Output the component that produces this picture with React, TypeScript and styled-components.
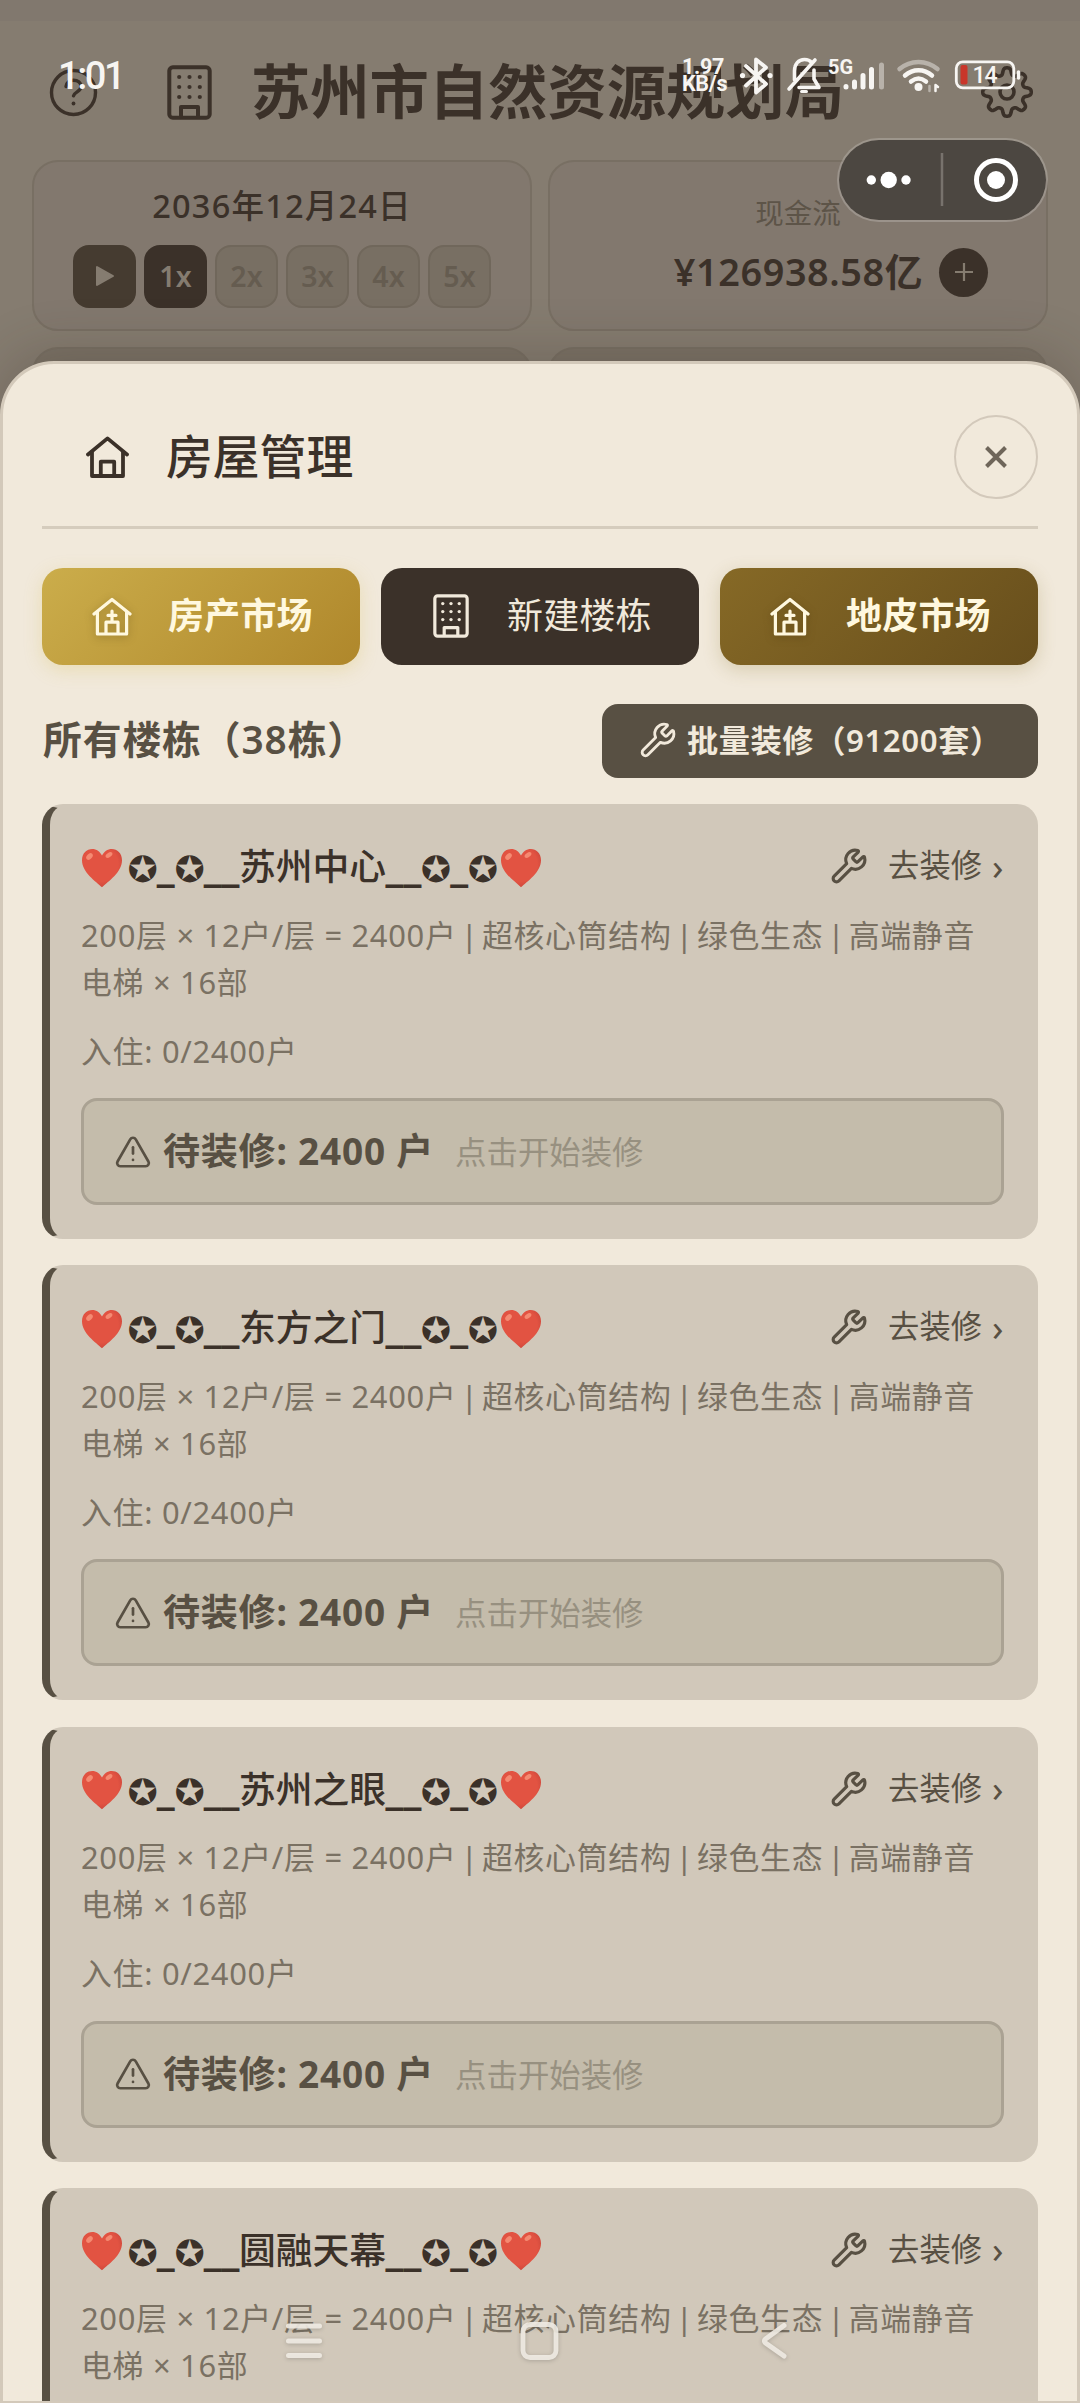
import React from 'react';
import styled, { createGlobalStyle, css } from 'styled-components';
import { Wrench, TriangleAlert } from 'lucide-react';

const INK = '#3b3129';
const BROWN = '#585043';

const GlobalStyle = createGlobalStyle`
  * { box-sizing: border-box; }
  body {
    margin: 0;
    background: #81786e;
    font-family: 'Noto Sans', 'Noto Sans CJK SC', sans-serif;
    color: ${INK};
  }
  button { font: inherit; color: inherit; border: 0; background: none; padding: 0; margin: 0; }
  svg { display: block; flex: none; }
`;

const Screen = styled.div`
  position: relative;
  width: 1080px;
  height: 2403px;
  overflow: hidden;
  padding-top: 21px;
`;

const AppPanel = styled.main`
  height: 1000px;
  background: #857c70;
`;

const AppHeader = styled.header`
  display: flex;
  align-items: center;
  height: 139px;
  padding: 3px 46px 0 49px;
`;

const AppTitle = styled.h1`
  flex: 1;
  margin: -3px 0 0 39px;
  font-size: 59.3px;
  font-weight: 700;
  line-height: 70px;
  white-space: nowrap;
`;

const BuildingSlot = styled.div`
  margin-left: 69px;
`;

const StatGrid = styled.section`
  display: grid;
  grid-template-columns: 500px 500px;
  column-gap: 16px;
  row-gap: 16px;
  padding-left: 32px;
`;

const StatCard = styled.div<{ $dim?: boolean }>`
  display: flex;
  flex-direction: column;
  align-items: center;
  height: 171px;
  border: 2px solid #786f63;
  border-radius: 26px;
  background: ${(p) => (p.$dim ? '#7b7266' : '#82786e')};
`;

const DateText = styled.div`
  margin-top: 22px;
  font-size: 32.5px;
  font-weight: 500;
  line-height: 44px;
  letter-spacing: 1.2px;
`;

const SpeedRow = styled.div`
  display: flex;
  gap: 8px;
  margin-top: 17px;
`;

const SpeedButton = styled.button<{ $kind: 'play' | 'active' | 'idle' }>`
  display: flex;
  align-items: center;
  justify-content: center;
  width: 63px;
  height: 63px;
  padding-bottom: 2px;
  border-radius: 16px;
  font-size: 28.5px;
  font-weight: 600;
  ${(p) =>
    p.$kind === 'play'
      ? css`background: #453b30; color: #857c70;`
      : p.$kind === 'active'
      ? css`background: ${INK}; color: #857c70;`
      : css`background: #786f63; border: 2px solid #70675b; color: #655c50;`}
`;

const CashLabel = styled.div`
  margin-top: 31px;
  font-size: 28.5px;
  line-height: 40px;
  color: #5d5448;
`;

const CashRow = styled.div`
  display: flex;
  align-items: center;
  gap: 16px;
  margin-top: 14px;
  padding-left: 66px;
`;

const CashValue = styled.div`
  font-size: 37.8px;
  font-weight: 600;
  line-height: 50px;
  letter-spacing: 0.6px;
  white-space: nowrap;
`;

const PlusButton = styled.button`
  display: flex;
  align-items: center;
  justify-content: center;
  width: 49px;
  height: 49px;
  border-radius: 50%;
  background: ${INK};
`;

const Sheet = styled.section`
  position: absolute;
  left: 0;
  right: 0;
  top: 361px;
  bottom: 0;
  overflow: hidden;
  padding: 0 39px;
  border: 3px solid #d3c9ba;
  border-bottom-width: 2px;
  border-radius: 54px 54px 0 0;
  background: #f1e9db;
`;

const SheetShade = styled.div`
  position: absolute;
  left: 0;
  right: 0;
  top: 361px;
  height: 400px;
  border-radius: 54px 54px 0 0;
  box-shadow: 0 -10px 52px rgba(50, 40, 30, 0.22);
`;

const SheetHeader = styled.header`
  display: flex;
  align-items: center;
  height: 165px;
  padding: 24px 0 0 44px;
  border-bottom: 3px solid #d5ccbd;
`;

const SheetTitle = styled.h2`
  flex: 1;
  margin: -3px 0 0 37px;
  font-size: 46.8px;
  font-weight: 500;
  line-height: 60px;
`;

const CloseButton = styled.button`
  display: flex;
  align-items: center;
  justify-content: center;
  width: 84px;
  height: 84px;
  border: 2.6px solid #d3c9bb;
  border-radius: 50%;
`;

const ActionRow = styled.div`
  display: grid;
  grid-template-columns: repeat(3, 318px);
  gap: 21px;
  margin-top: 39px;
`;

const ActionButton = styled.button<{ $tone: 'gold' | 'dark' | 'bronze' }>`
  display: flex;
  align-items: center;
  height: 97px;
  padding: 0 0 1px 50px;
  border-radius: 21px;
  font-size: 36px;
  line-height: 50px;
  letter-spacing: 0.2px;
  white-space: nowrap;
  ${(p) =>
    p.$tone === 'gold'
      ? css`
          background: linear-gradient(135deg, #cbad4b 0%, #af872b 100%);
          box-shadow: 0 5px 18px rgba(212, 185, 70, 0.26);
          color: #fff8df;
          font-weight: 700;
        `
      : p.$tone === 'bronze'
      ? css`
          background: linear-gradient(135deg, #866926 0%, #674e1c 100%);
          box-shadow: 0 5px 18px rgba(139, 115, 40, 0.24);
          color: #fff8df;
          font-weight: 700;
        `
      : css`
          background: ${INK};
          color: #f1e9db;
        `}
  svg {
    filter: ${(p) => (p.$tone === 'dark' ? 'none' : 'drop-shadow(0 2px 4px rgba(60, 40, 0, 0.3))')};
  }
`;

const ActionIcon = styled.span`
  display: flex;
  justify-content: center;
  width: 40px;
  margin-right: 36px;
`;

const SectionRow = styled.div`
  display: flex;
  align-items: center;
  justify-content: space-between;
  height: 74px;
  margin-top: 39px;
`;

const SectionTitle = styled.h3`
  margin: -4px 0 0 1px;
  font-size: 38.8px;
  font-weight: 600;
  line-height: 54px;
  letter-spacing: 0.9px;
  color: ${BROWN};
  white-space: nowrap;
`;

const BatchButton = styled.button`
  display: flex;
  align-items: center;
  width: 436px;
  height: 74px;
  padding: 0 0 2px 37px;
  gap: 10px;
  border-radius: 16px;
  background: ${BROWN};
  color: #f1e9db;
  font-size: 31.2px;
  font-weight: 600;
  line-height: 44px;
  letter-spacing: 0.6px;
  white-space: nowrap;
`;

const List = styled.div`
  display: flex;
  flex-direction: column;
  gap: 26.3px;
  margin-top: 26px;
`;

const Card = styled.article`
  flex: none;
  height: 435px;
  padding: 34px 32.5px 0 31px;
  border: 2px solid #d1c8ba;
  border-left: 8px solid ${BROWN};
  border-radius: 21px;
  background: #d1c8ba;
`;

const CardHead = styled.div`
  display: flex;
  align-items: center;
  justify-content: space-between;
  height: 52px;
`;

const CardName = styled.div`
  display: flex;
  align-items: center;
  font-size: 36.8px;
  font-weight: 500;
  line-height: 52px;
  white-space: nowrap;
  svg { margin-top: 3px; }
`;

const StarRun = styled.span<{ $side: 'left' | 'right' }>`
  display: flex;
  align-items: center;
  margin-left: ${(p) => (p.$side === 'left' ? '4.5px' : '0')};
  margin-right: ${(p) => (p.$side === 'right' ? '2.5px' : '0')};
`;

const Star = styled.span`
  width: 29.6px;
  margin-top: 8px;
  text-align: center;
  font-family: 'DejaVu Sans', sans-serif;
  font-size: 36px;
  font-weight: 400;
`;

const Bar = styled.span<{ $n: number }>`
  display: flex;
  justify-content: center;
  width: ${(p) => p.$n * 17.4}px;
  font-size: 39.5px;
  font-weight: 800;
`;

const GoLink = styled.button`
  display: flex;
  align-items: center;
  color: ${BROWN};
  font-size: 31.3px;
  line-height: 44px;
`;

const GoLabel = styled.span`
  margin: -2px 10px 0 20px;
`;

const GoArrow = styled.span`
  margin-top: -1px;
  font-size: 37px;
`;

const Info = styled.p`
  margin: 19.5px 0 0;
  font-size: 30.9px;
  line-height: 47px;
  letter-spacing: 0.7px;
  color: #7a7163;
  white-space: nowrap;
`;

const Pipe = styled.span`
  display: inline-block;
  width: 25.4px;
  text-align: center;
  line-height: 40px;
  letter-spacing: 0;
`;

const Occupancy = styled(Info)`
  margin-top: 22px;
`;

const Pending = styled.div`
  display: flex;
  align-items: center;
  height: 107px;
  margin-top: 23.5px;
  padding-left: 30px;
  border: 3px solid #aaa293;
  border-radius: 16px;
  background: #c4bcab;
  color: ${BROWN};
`;

const PendingCount = styled.strong`
  margin: -5px 0 0 11px;
  font-size: 37px;
  font-weight: 700;
  letter-spacing: 0.8px;
  white-space: pre;
`;

const PendingHint = styled.span`
  margin: -2px 0 0 21px;
  font-size: 31.4px;
  color: #979080;
`;

const StatusBar = styled.div`
  position: absolute;
  left: 60px;
  right: 58px;
  top: 56px;
  height: 40px;
  display: flex;
  align-items: center;
  color: #f7f5f2;
  font-family: Roboto, sans-serif;
`;

const Clock = styled.span`
  flex: 1;
  margin-left: -2px;
  font-size: 38px;
  font-weight: 500;
  letter-spacing: -2.4px;
`;

const NetSpeed = styled.span`
  width: 52px;
  margin-top: -2px;
  font-size: 21.5px;
  font-weight: 700;
  line-height: 17px;
  letter-spacing: -0.3px;
`;

const Capsule = styled.div`
  position: absolute;
  left: 837px;
  top: 138px;
  width: 211px;
  height: 84px;
  border: 2px solid rgba(255, 255, 255, 0.2);
  border-radius: 42px;
  background: #4c4741;
  background-clip: padding-box;
`;

const NavBar = styled.nav`
  position: absolute;
  left: 284px;
  right: 292px;
  bottom: 40px;
  display: flex;
  align-items: center;
  justify-content: space-between;
  svg { filter: drop-shadow(0 1px 2px rgba(0, 0, 0, 0.2)); }
  svg:nth-child(2) { margin-right: 5px; }
`;

const BuildingIcon = ({ width, color }: { width: number; color: string }) => (
  <svg width={width} height={(width * 55) / 45} viewBox="0 0 45 55" fill="none" stroke={color} strokeWidth="4" strokeLinejoin="round">
    <rect x="2.3" y="2.3" width="40.4" height="50.4" rx="3.5" />
    <path d="M14 52V42h17v10" />
    {[12, 22, 32].map((y) =>
      [12.2, 22.5, 32.8].map((x) => <circle key={`${x}-${y}`} cx={x} cy={y} r="2.1" fill={color} stroke="none" />)
    )}
  </svg>
);

const HouseIcon = () => (
  <svg width="43" height="42" viewBox="0 0 43 42" fill="none" stroke={INK} strokeWidth="3.8" strokeLinecap="round" strokeLinejoin="round">
    <path d="M2 18.5 21.5 2.4 41 18.5" />
    <path d="M6 16v24h31V16" />
    <path d="M14.8 39V25.7h13.4V39" />
  </svg>
);

const MarketIcon = () => (
  <svg width="40" height="39" viewBox="0 0 40 39" fill="none" stroke="#fff8df" strokeWidth="3.2" strokeLinecap="round" strokeLinejoin="round">
    <path d="M2 17 20 2.4 38 17" />
    <path d="M5.4 15v22h29.2V15" />
    <path d="M14 36V25.2h12V36M20 14v9.5M16 18.4h8" />
  </svg>
);

const gearPath = (() => {
  const pts: string[] = [];
  for (let i = 0; i < 240; i++) {
    const t = (i / 240) * Math.PI * 2;
    const r = 20.8 + 3.7 * Math.tanh(1.6 * Math.cos(8 * t));
    pts.push(`${(27 + r * Math.cos(t)).toFixed(2)} ${(27 + r * Math.sin(t)).toFixed(2)}`);
  }
  return `M${pts.join('L')}Z`;
})();

const GearIcon = () => (
  <svg width="54" height="54" viewBox="0 0 54 54" fill="none" stroke={INK} strokeWidth="3.6" strokeLinejoin="round">
    <path d={gearPath} />
    <circle cx="27" cy="27" r="7" />
  </svg>
);

const HelpIcon = () => (
  <svg width="49" height="49" viewBox="0 0 49 49" fill="none" stroke={INK} strokeWidth="3.4" strokeLinecap="round">
    <circle cx="24.5" cy="24.5" r="22" />
    <path d="M17 18.5c.5-4 3.6-6.3 7.5-6.3 4.3 0 7.5 2.5 7.5 6.3 0 5-6.5 5.2-7.5 9.3" />
    <circle cx="24.5" cy="35.5" r="1.9" fill={INK} stroke="none" />
  </svg>
);

const HeartIcon = () => (
  <svg width="42" height="40" viewBox="0 0 42 40">
    <defs>
      <radialGradient id="heart" cx="0.45" cy="0.4" r="0.65">
        <stop offset="0.7" stopColor="#e25342" />
        <stop offset="1" stopColor="#c9453a" />
      </radialGradient>
    </defs>
    <path
      d="M21 39.2C15 33.5 1 24.5 1 12.2 1 5.2 5.8 1 11.2 1c4.3 0 7.9 2.7 9.8 6.6C22.9 3.7 26.5 1 30.8 1 36.2 1 41 5.2 41 12.2c0 12.3-14 21.3-20 27Z"
      fill="url(#heart)"
    />
    <ellipse cx="8.5" cy="8.5" rx="3.8" ry="2.6" transform="rotate(-45 8.5 8.5)" fill="#f58a72" />
    <ellipse cx="28" cy="7" rx="3.8" ry="2.2" transform="rotate(-35 28 7)" fill="#f58a72" />
  </svg>
);

const StatusIcons = () => (
  <svg width="288" height="40" viewBox="734 56 288 40" fill="none" stroke="#f7f5f2" strokeLinecap="round" strokeLinejoin="round">
    <path d="M746 66l20 18-10 8.500V59.500l10 8-20 18" strokeWidth="3.8" />
    <circle cx="742.5" cy="75.5" r="2.6" fill="#f7f5f2" stroke="none" />
    <circle cx="770" cy="75.5" r="2.6" fill="#f7f5f2" stroke="none" />
    <path d="M789 89l26-29M794.500 80V71c0-7 4-11.500 10-11.500 3 0 5.500 1 7 3M814 70v9l5 8.500H799" strokeWidth="3.6" />
    <path d="M801.500 91.500h5" strokeWidth="3" />
    <text x="828" y="73.5" fontSize="20" fontWeight="700" fontFamily="Roboto, sans-serif" fill="#f7f5f2" stroke="none">5G</text>
    <path d="M846 86.500v.5M854.500 82v5M863 75.500v11.500M871.500 69.500V87" strokeWidth="5" />
    <path d="M881.500 65v22" strokeWidth="5" opacity=".45" />
    <path d="M899.500 69c11-9.500 27-9.500 38 0" strokeWidth="4.5" opacity=".45" />
    <path d="M905 75.500c8-7 19-7 27 0M911 81.500c5-4 10-4 15 0" strokeWidth="4.5" />
    <circle cx="918.5" cy="87" r="4" fill="#f7f5f2" stroke="none" />
    <path d="M929.500 86v5" strokeWidth="2.5" opacity=".45" />
    <path d="M935.500 91v-6l2.500 2" strokeWidth="2.5" />
    <rect x="956.3" y="61.8" width="57.5" height="26" rx="6.5" strokeWidth="2.8" />
    <rect x="960.5" y="65" width="7" height="19.5" rx="2" fill="#c9362a" stroke="none" />
    <path d="M1018.500 72v6" strokeWidth="3.5" />
    <text x="972.5" y="83" fontSize="23" letterSpacing="-1" fontFamily="Roboto, sans-serif" fontWeight="500" fill="#f7f5f2" stroke="none">14</text>
  </svg>
);

const buildings = ['苏州中心', '东方之门', '苏州之眼', '圆融天幕'];

const BuildingCard = ({ name }: { name: string }) => (
  <Card>
    <CardHead>
      <CardName>
        <HeartIcon />
        <StarRun $side="left">
          <Star>✪</Star>
          <Bar $n={1}>_</Bar>
          <Star>✪</Star>
          <Bar $n={2}>__</Bar>
        </StarRun>
        <span>{name}</span>
        <StarRun $side="right">
          <Bar $n={2}>__</Bar>
          <Star>✪</Star>
          <Bar $n={1}>_</Bar>
          <Star>✪</Star>
        </StarRun>
        <HeartIcon />
      </CardName>
      <GoLink>
        <Wrench size={38} strokeWidth={2} />
        <GoLabel>去装修</GoLabel>
        <GoArrow>›</GoArrow>
      </GoLink>
    </CardHead>
    <Info>
      200层 × 12户/层 = 2400户
      <Pipe>|</Pipe>
      超核心筒结构
      <Pipe>|</Pipe>
      绿色生态
      <Pipe>|</Pipe>
      高端静音
      <br />
      电梯 × 16部
    </Info>
    <Occupancy>入住: 0/2400户</Occupancy>
    <Pending>
      <TriangleAlert size={38} strokeWidth={1.7} />
      <PendingCount>待装修: 2400 户</PendingCount>
      <PendingHint>点击开始装修</PendingHint>
    </Pending>
  </Card>
);

export default function App() {
  return (
    <Screen>
      <GlobalStyle />
      <AppPanel>
        <AppHeader>
          <HelpIcon />
          <BuildingSlot>
            <BuildingIcon width={45} color={INK} />
          </BuildingSlot>
          <AppTitle>苏州市自然资源规划局</AppTitle>
          <GearIcon />
        </AppHeader>
        <StatGrid>
          <StatCard>
            <DateText>2036年12月24日</DateText>
            <SpeedRow>
              <SpeedButton $kind="play">
                <svg width="20" height="22" viewBox="0 0 20 22">
                  <path d="M2 2v18l16-9Z" fill="#857c70" stroke="#857c70" strokeWidth="2" strokeLinejoin="round" />
                </svg>
              </SpeedButton>
              <SpeedButton $kind="active">1x</SpeedButton>
              {['2x', '3x', '4x', '5x'].map((s) => (
                <SpeedButton key={s} $kind="idle">{s}</SpeedButton>
              ))}
            </SpeedRow>
          </StatCard>
          <StatCard>
            <CashLabel>现金流</CashLabel>
            <CashRow>
              <CashValue>¥126938.58亿</CashValue>
              <PlusButton>
                <svg width="20" height="20" viewBox="0 0 20 20" stroke="#857c70" strokeWidth="2.2">
                  <path d="M10 1v18M1 10h18" />
                </svg>
              </PlusButton>
            </CashRow>
          </StatCard>
          <StatCard $dim />
          <StatCard $dim />
        </StatGrid>
      </AppPanel>

      <SheetShade />
      <Sheet>
        <SheetHeader>
          <HouseIcon />
          <SheetTitle>房屋管理</SheetTitle>
          <CloseButton>
            <svg width="24" height="24" viewBox="0 0 24 24" stroke="#6f665a" strokeWidth="4">
              <path d="M2.500 2.500l19 19M21.500 2.500l-19 19" />
            </svg>
          </CloseButton>
        </SheetHeader>

        <ActionRow>
          <ActionButton $tone="gold">
            <ActionIcon><MarketIcon /></ActionIcon>
            房产市场
          </ActionButton>
          <ActionButton $tone="dark">
            <ActionIcon><BuildingIcon width={36} color="#f1e9db" /></ActionIcon>
            新建楼栋
          </ActionButton>
          <ActionButton $tone="bronze">
            <ActionIcon><MarketIcon /></ActionIcon>
            地皮市场
          </ActionButton>
        </ActionRow>

        <SectionRow>
          <SectionTitle>所有楼栋（38栋）</SectionTitle>
          <BatchButton>
            <Wrench size={38} strokeWidth={1.8} />
            批量装修（91200套）
          </BatchButton>
        </SectionRow>

        <List>
          {buildings.map((name) => (
            <BuildingCard key={name} name={name} />
          ))}
        </List>
      </Sheet>

      <StatusBar>
        <Clock>1:01</Clock>
        <NetSpeed>1.97<br />KB/s</NetSpeed>
        <StatusIcons />
      </StatusBar>

      <Capsule>
        <svg width="207" height="80" viewBox="839 140 207 80">
          <g fill="#fff">
            <circle cx="871.3" cy="180" r="4.7" />
            <circle cx="888.7" cy="180" r="8.2" />
            <circle cx="906" cy="180" r="4.7" />
            <circle cx="996" cy="180" r="9" />
          </g>
          <circle cx="996" cy="180" r="19.5" fill="none" stroke="#fff" strokeWidth="5" />
          <path d="M942 153v53" stroke="#78736d" strokeWidth="2.5" />
        </svg>
      </Capsule>

      <NavBar>
        <svg width="40" height="44" viewBox="0 0 40 44" stroke="#f0ebe3" strokeOpacity=".9" strokeWidth="5" strokeLinecap="round">
          <path d="M4.500 7h31M4.500 22h31M4.500 36.500h31" />
        </svg>
        <svg width="44" height="44" viewBox="0 0 44 44" fill="none" stroke="#f0ebe3" strokeOpacity=".9" strokeWidth="4.8">
          <rect x="5" y="5.5" width="33" height="33" rx="7" />
        </svg>
        <svg width="28" height="44" viewBox="0 0 28 44" fill="none" stroke="#f0ebe3" strokeOpacity=".9" strokeWidth="5" strokeLinecap="round" strokeLinejoin="round">
          <path d="M24 6.500 5.500 20q-2 2 0 4L24 37" />
        </svg>
      </NavBar>
    </Screen>
  );
}
